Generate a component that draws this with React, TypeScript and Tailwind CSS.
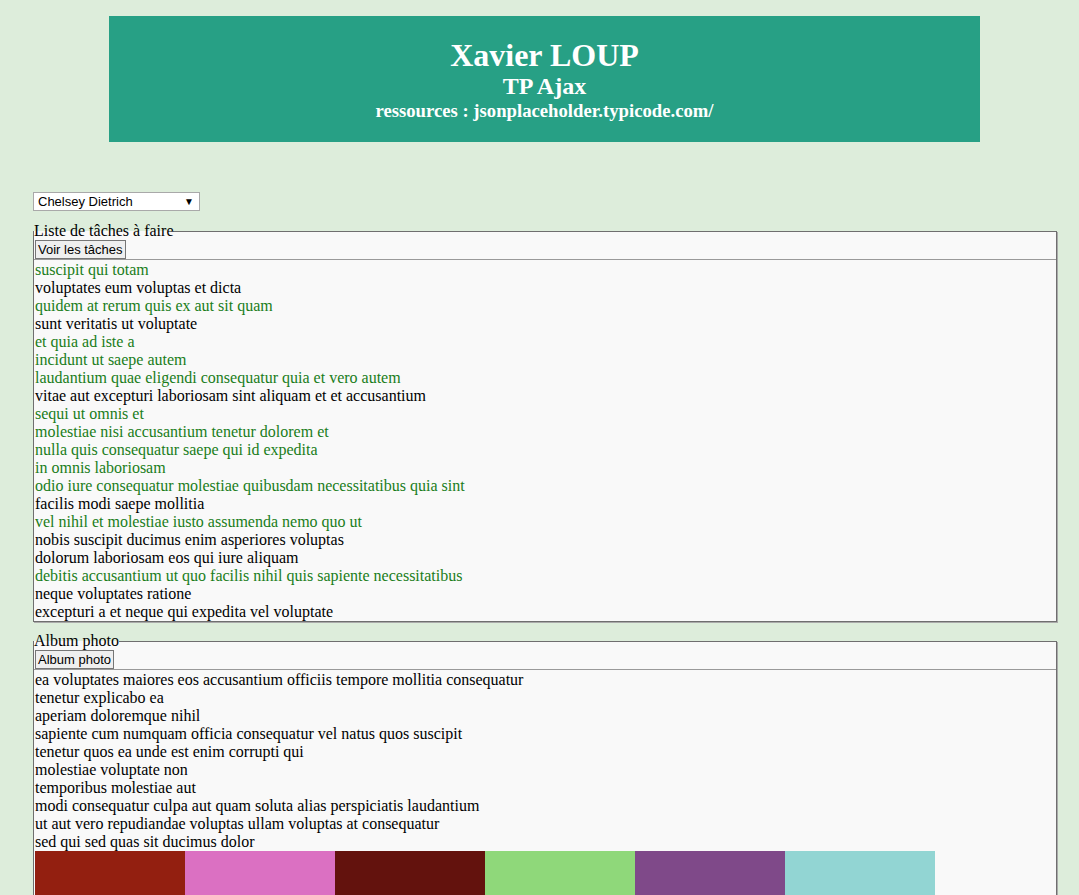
const todos: [string, boolean][] = [
  ["suscipit qui totam", true],
  ["voluptates eum voluptas et dicta", false],
  ["quidem at rerum quis ex aut sit quam", true],
  ["sunt veritatis ut voluptate", false],
  ["et quia ad iste a", true],
  ["incidunt ut saepe autem", true],
  ["laudantium quae eligendi consequatur quia et vero autem", true],
  ["vitae aut excepturi laboriosam sint aliquam et et accusantium", false],
  ["sequi ut omnis et", true],
  ["molestiae nisi accusantium tenetur dolorem et", true],
  ["nulla quis consequatur saepe qui id expedita", true],
  ["in omnis laboriosam", true],
  ["odio iure consequatur molestiae quibusdam necessitatibus quia sint", true],
  ["facilis modi saepe mollitia", false],
  ["vel nihil et molestiae iusto assumenda nemo quo ut", true],
  ["nobis suscipit ducimus enim asperiores voluptas", false],
  ["dolorum laboriosam eos qui iure aliquam", false],
  ["debitis accusantium ut quo facilis nihil quis sapiente necessitatibus", true],
  ["neque voluptates ratione", false],
  ["excepturi a et neque qui expedita vel voluptate", false],
];

const photos = [
  "ea voluptates maiores eos accusantium officiis tempore mollitia consequatur",
  "tenetur explicabo ea",
  "aperiam doloremque nihil",
  "sapiente cum numquam officia consequatur vel natus quos suscipit",
  "tenetur quos ea unde est enim corrupti qui",
  "molestiae voluptate non",
  "temporibus molestiae aut",
  "modi consequatur culpa aut quam soluta alias perspiciatis laudantium",
  "ut aut vero repudiandae voluptas ullam voluptas at consequatur",
  "sed qui sed quas sit ducimus dolor",
];

const thumbs = [
  "bg-[#931f10]",
  "bg-[#db70c2]",
  "bg-[#63120d]",
  "bg-[#8fd87a]",
  "bg-[#7f4989]",
  "bg-[#92d5d3]",
];

export default function App() {
  return (
    <div className="min-h-[895px] bg-[#ddeddb] pt-4 font-['Liberation_Serif',serif] text-black">
      <header className="ml-[109px] flex h-[126px] w-[871px] flex-col items-center bg-[#27a085] pt-[22px] font-bold text-white">
        <h1 className="text-[32px] leading-[34px]">Xavier LOUP</h1>
        <h2 className="text-[24px] leading-[28px]">TP Ajax</h2>
        <h3 className="text-[18.7px] leading-[22px]">ressources : jsonplaceholder.typicode.com/</h3>
      </header>

      <div className="ml-[33px] mt-[50px] w-[1024px]">
        <div className="relative w-[167px]">
          <select className="block h-[19px] w-full appearance-none border border-[#a9a9a9] bg-white pl-[4px] font-['Liberation_Sans',Arial,sans-serif] text-[13px] leading-[17px]">
            <option>Chelsey Dietrich</option>
          </select>
          <span className="pointer-events-none absolute right-[6px] top-[3px] text-[10px] leading-[13px]">▼</span>
        </div>

        <fieldset className="mt-[11px] border border-[#6f6f6f] bg-[#f9f9f9] shadow-[1px_1px_0_#aaa]">
          <legend className="text-[16px] leading-[18px]">Liste de tâches à faire</legend>
          <button className="ml-px block h-[19px] border border-[#767676] bg-[#efefef] px-[2px] font-['Liberation_Sans',Arial,sans-serif] text-[13px] leading-[15px]">
            Voir les tâches
          </button>
          <div className="border-t border-[#9a9a9a] pl-px pt-px text-[16px] leading-[18px]">
            {todos.map(([t, done]) => (
              <div key={t} className={done ? "text-[#1a7d1a]" : ""}>
                {t}
              </div>
            ))}
          </div>
        </fieldset>

        <fieldset className="mt-[10px] border border-[#6f6f6f] bg-[#f9f9f9] shadow-[1px_1px_0_#aaa]">
          <legend className="text-[16px] leading-[18px]">Album photo</legend>
          <button className="ml-px block h-[19px] border border-[#767676] bg-[#efefef] px-[2px] font-['Liberation_Sans',Arial,sans-serif] text-[13px] leading-[15px]">
            Album photo
          </button>
          <div className="border-t border-[#9a9a9a] pl-px pt-px text-[16px] leading-[18px]">
            {photos.map((t) => (
              <div key={t}>{t}</div>
            ))}
            <div className="flex">
              {thumbs.map((c) => (
                <div key={c} className={`h-[150px] w-[150px] ${c}`} />
              ))}
            </div>
          </div>
        </fieldset>
      </div>
    </div>
  );
}
